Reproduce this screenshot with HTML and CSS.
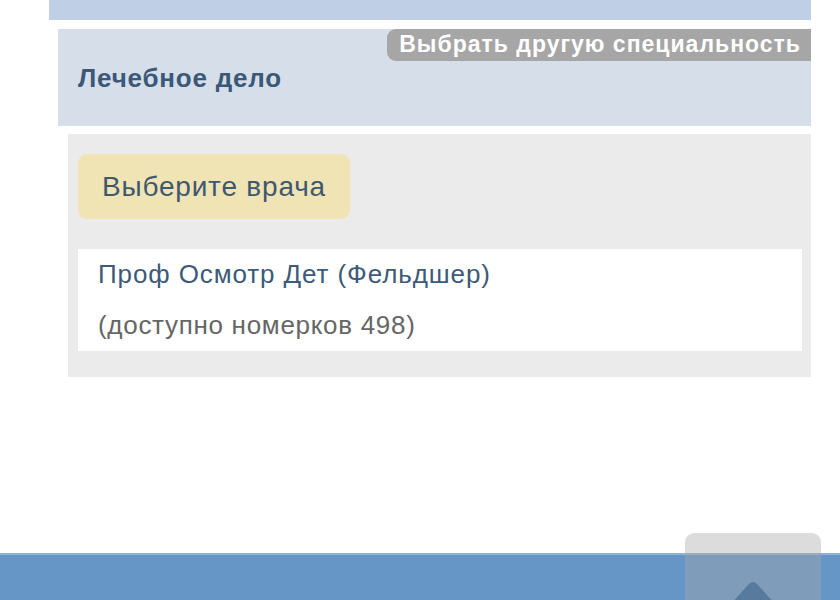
FILE: index.html
```html
<!DOCTYPE html>
<html lang="ru">
<head>
<meta charset="utf-8">
<title>Запись к врачу</title>
<link rel="stylesheet" href="styles.css">
</head>
<body>
<div class="page">
  <div class="topbar"></div>
  <section class="spec">
    <a class="spec-change" href="#">Выбрать другую специальность</a>
    <h2 class="spec-title">Лечебное дело</h2>
  </section>
  <section class="doctors">
    <div class="doctors-head">Выберите врача</div>
    <a class="doctor" href="#">
      <span class="doctor-name">Проф Осмотр Дет (Фельдшер)</span>
      <span class="doctor-count">(доступно номерков 498)</span>
    </a>
  </section>
</div>
<footer class="footer"></footer>
<a class="to-top" href="#">
  <svg width="136" height="70" viewBox="0 0 136 70" aria-hidden="true">
    <path d="M63 52 Q68 46 73 52 L100 82 L36 82 Z" fill="#587a9c"/>
  </svg>
</a>
</body>
</html>
```
FILE: styles.css
```css
html, body {
  margin: 0;
  padding: 0;
  background: #ffffff;
  font-family: "Liberation Sans", Arial, Helvetica, sans-serif;
  height: 600px;
  overflow: hidden;
}

.page {
  padding: 0 29px 0 49px;
}

.topbar {
  height: 20px;
  background: #bfcfe6;
  margin-bottom: 9px;
}

.spec {
  position: relative;
  margin-left: 9px;
  height: 97px;
  background: #d6dee9;
  display: flex;
  align-items: center;
  padding-left: 20px;
  padding-top: 1px;
  box-sizing: border-box;
}

.spec-title {
  margin: 0;
  font-size: 26px;
  font-weight: bold;
  letter-spacing: 0.8px;
  color: #3a5877;
}

.spec-change {
  position: absolute;
  top: 0;
  right: 0;
  height: 32px;
  box-sizing: border-box;
  padding: 0 10px 0 12px;
  background: #a6a6a6;
  border-radius: 9px 0 0 9px;
  color: #ffffff;
  font-weight: bold;
  font-size: 23px;
  line-height: 31px;
  text-decoration: none;
  white-space: nowrap;
  letter-spacing: 1px;
}

.doctors {
  margin-top: 8px;
  margin-left: 19px;
  background: #ebebeb;
  padding: 20px 9px 25px 10px;
  height: 243px;
  box-sizing: border-box;
}

.doctors-head {
  display: inline-flex;
  align-items: center;
  height: 65px;
  width: 272px;
  box-sizing: border-box;
  padding-left: 24px;
  background: #f0e4b4;
  border-radius: 9px;
  font-size: 28px;
  letter-spacing: 0.8px;
  color: #3e5870;
}

.doctor {
  display: flex;
  flex-direction: column;
  margin-top: 30px;
  height: 102px;
  box-sizing: border-box;
  background: #ffffff;
  padding: 10px 20px 0 20px;
  text-decoration: none;
  font-size: 26px;
  letter-spacing: 0.9px;
}

.doctor-name {
  color: #3d5a78;
  line-height: 30px;
}

.doctor-count {
  color: #666666;
  margin-top: 21px;
  line-height: 30px;
  letter-spacing: 0.7px;
}

.footer {
  margin-top: 176px;
  height: 47px;
  background: #6596c6;
  border-top: 2px solid #8fb1d3;
  box-sizing: border-box;
}

.to-top {
  position: absolute;
  left: 685px;
  top: 533px;
  width: 136px;
  height: 70px;
  background: rgba(167, 167, 167, 0.4);
  border-radius: 9px 9px 0 0;
  display: block;
  overflow: hidden;
}

.to-top svg {
  display: block;
}
```
